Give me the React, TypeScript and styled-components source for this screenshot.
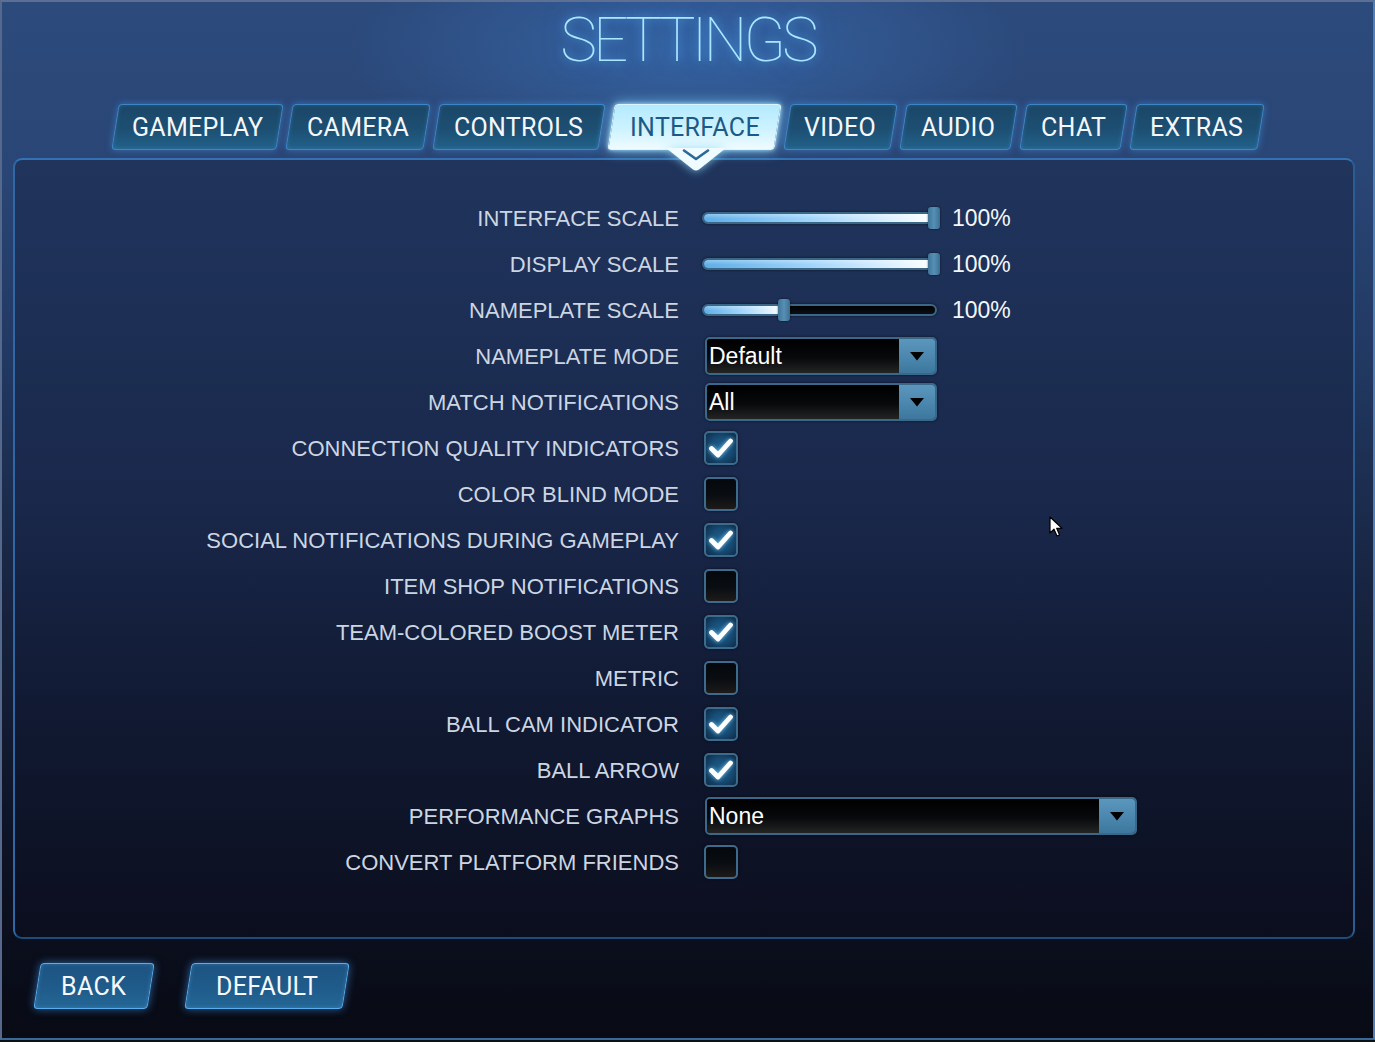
import React from "react";
import styled, { createGlobalStyle, css } from "styled-components";

const GlobalStyle = createGlobalStyle`
  html, body { margin: 0; padding: 0; background: #0c1114; }
  body { font-family: "Liberation Sans", Arial, sans-serif; overflow: hidden; }
  * { box-sizing: border-box; }
`;

const Frame = styled.div`
  position: relative;
  width: 1375px;
  height: 1040px;
  border: 2px solid;
  border-color: #5d6f92 #4f80b6 #3a6898 #56688c;
  background:
    radial-gradient(ellipse 340px 120px at 50% 48px, rgba(62, 122, 196, 0.55), rgba(62, 122, 196, 0) 100%),
    linear-gradient(180deg, #2c4a7c 0%, #2a4676 16%, #213861 35%, #17233f 58%, #0e1427 80%, #080a14 100%);
  display: flex;
  flex-direction: column;
  overflow: hidden;
`;

const Title = styled.h1`
  margin: 0;
  height: 76px;
  line-height: 76px;
  text-align: center;
  font-family: Roboto, "Liberation Sans", sans-serif;
  font-weight: 100;
  font-size: 62px;
  letter-spacing: -4px;
  color: #a9e6ff;
  text-shadow: 0 0 10px rgba(90, 180, 255, 0.85), 0 0 22px rgba(60, 150, 255, 0.5);
`;

const TabRow = styled.nav`
  margin-top: 26px;
  height: 46px;
  display: flex;
  justify-content: center;
  gap: 9px;
`;

const Tab = styled.div<{ $active?: boolean; $w: number }>`
  width: ${(p) => p.$w}px;
  height: 46px;
  display: flex;
  align-items: center;
  justify-content: center;
  transform: skewX(-9deg);
  border-radius: 4px;
  border: 1.5px solid #3d86c6;
  background: linear-gradient(180deg, #1b4666 0%, #1d4f73 55%, #226189 100%);
  box-shadow: 0 0 7px rgba(70, 150, 230, 0.55), inset 0 0 4px rgba(90, 170, 240, 0.25);
  color: #f4f8fc;
  ${(p) =>
    p.$active &&
    css`
      border-color: #d8f6ff;
      background: linear-gradient(180deg, #b4eaff 0%, #cdf3ff 55%, #effbff 100%);
      box-shadow: 0 0 14px rgba(130, 215, 255, 0.85), 0 0 4px rgba(200, 240, 255, 0.9);
      color: #1b5a86;
    `}
`;

const TabLabel = styled.span`
  position: relative;
  height: 100%;
  display: flex;
  align-items: center;
  transform: skewX(9deg);
  font-family: Roboto, "Liberation Sans", sans-serif;
  font-size: 25px;
  font-weight: 400;
  letter-spacing: 0.3px;
`;

const Notch = styled.svg`
  position: absolute;
  top: 100%;
  left: 50%;
  margin-left: -29px;
  margin-top: -1px;
  width: 60px;
  height: 24px;
  filter: drop-shadow(0 0 5px rgba(140, 220, 255, 0.85));
`;

const Panel = styled.section`
  margin: 8px 18px 0 11px;
  height: 781px;
  border: 2px solid;
  border-color: #3472b4 #2a5e92 #1d4c78 #2f68a4;
  border-radius: 9px;
  background: linear-gradient(180deg, #20345c 0%, #1d2f55 20%, #19274a 45%, #111a33 70%, #0b0e1e 100%);
  padding-top: 35px;
  display: flex;
  flex-direction: column;
`;

const Row = styled.div`
  height: 46px;
  display: grid;
  grid-template-columns: 664px 1fr;
  column-gap: 24px;
  align-items: center;
`;

const Label = styled.div`
  text-align: right;
  padding-top: 1px;
  font-family: "Liberation Sans", Arial, sans-serif;
  font-size: 22px;
  color: #ccd6e3;
  white-space: nowrap;
`;

const Control = styled.div`
  display: flex;
  align-items: center;
`;

const SliderWrap = styled.div`
  display: flex;
  align-items: center;
  margin-left: -1px;
`;

const Track = styled.div`
  position: relative;
  width: 235px;
  height: 12px;
  border-radius: 6px;
  border: 2px solid #3b6786;
  background: linear-gradient(180deg, #000000, #0a0f16);
  box-shadow: 0 0 3px rgba(0, 0, 0, 0.6);
`;

const Fill = styled.div`
  height: 100%;
  border-radius: 4px;
  background:
    linear-gradient(180deg, rgba(255, 255, 255, 0.3) 0%, rgba(255, 255, 255, 0) 60%),
    linear-gradient(90deg, #5eaee8 0%, #9fd3fa 45%, #e4f4ff 85%, #ffffff 100%);
`;

const Thumb = styled.div`
  position: absolute;
  top: -7px;
  width: 12px;
  height: 22px;
  border-radius: 3px;
  background: linear-gradient(90deg, #3f7396 0%, #5690b5 50%, #3c6f92 100%);
  box-shadow: 0 0 2px rgba(0, 0, 0, 0.7);
`;

const Value = styled.span`
  margin-left: 15px;
  font-family: "Liberation Sans", Arial, sans-serif;
  font-size: 23px;
  color: #f4f7fa;
`;

const Select = styled.div<{ $wide?: boolean }>`
  margin-left: 2px;
  width: ${(p) => (p.$wide ? "432px" : "232px")};
  height: 38px;
  display: flex;
  border: 2px solid #3a6889;
  border-radius: 5px;
  overflow: hidden;
  box-shadow: 0 0 3px rgba(0, 0, 0, 0.6);
`;

const SelectText = styled.div`
  flex: 1;
  display: flex;
  align-items: center;
  padding-left: 2px;
  background: linear-gradient(180deg, #000000 0%, #07090b 55%, #242424 100%);
  font-family: "Liberation Sans", Arial, sans-serif;
  font-size: 23px;
  color: #ffffff;
`;

const SelectButton = styled.div`
  width: 36px;
  display: flex;
  align-items: center;
  justify-content: center;
  background: linear-gradient(180deg, #5b97bd 0%, #4a86ad 55%, #3d779e 100%);
`;

const Box = styled.div<{ $checked?: boolean }>`
  margin-left: 1px;
  width: 34px;
  height: 34px;
  border-radius: 5px;
  border: 2px solid #3e6a8c;
  display: flex;
  align-items: center;
  justify-content: center;
  background: ${(p) =>
    p.$checked
      ? "radial-gradient(circle at 50% 50%, #1f6494 0%, #164a72 55%, #0d2a45 100%)"
      : "linear-gradient(180deg, #04070c 0%, #0a0d12 55%, #1c1b1a 100%)"};
  box-shadow: 0 0 3px rgba(0, 0, 0, 0.6);
`;

const CheckMark = styled.svg`
  width: 26px;
  height: 22px;
  filter: drop-shadow(0 0 2px rgba(140, 215, 255, 0.9));
`;

const Footer = styled.footer`
  margin-top: 24px;
  padding-left: 35px;
  display: flex;
  gap: 37px;
`;

const Button = styled.button<{ $w: number }>`
  width: ${(p) => p.$w}px;
  height: 46px;
  padding: 0;
  transform: skewX(-9deg);
  border: 1.5px solid #58aef0;
  border-radius: 4px;
  background: linear-gradient(180deg, #1c5482 0%, #1f5b8b 55%, #246796 100%);
  box-shadow: 0 0 8px rgba(70, 160, 250, 0.6), inset 0 0 4px rgba(120, 190, 255, 0.25);
  color: #f6f9fc;
  font-family: Roboto, "Liberation Sans", sans-serif;
  font-size: 25px;
  letter-spacing: 0.4px;
  cursor: pointer;
`;

const ButtonLabel = styled.span`
  display: inline-block;
  transform: skewX(9deg);
`;

const Cursor = styled.svg`
  position: absolute;
  left: 1047px;
  top: 514px;
  width: 14px;
  height: 22px;
`;

type Setting =
  | { label: string; kind: "slider"; pct: number; value: string }
  | { label: string; kind: "select"; value: string; wide?: boolean }
  | { label: string; kind: "check"; checked: boolean };

const settings: Setting[] = [
  { label: "INTERFACE SCALE", kind: "slider", pct: 1, value: "100%" },
  { label: "DISPLAY SCALE", kind: "slider", pct: 1, value: "100%" },
  { label: "NAMEPLATE SCALE", kind: "slider", pct: 0.34, value: "100%" },
  { label: "NAMEPLATE MODE", kind: "select", value: "Default" },
  { label: "MATCH NOTIFICATIONS", kind: "select", value: "All" },
  { label: "CONNECTION QUALITY INDICATORS", kind: "check", checked: true },
  { label: "COLOR BLIND MODE", kind: "check", checked: false },
  { label: "SOCIAL NOTIFICATIONS DURING GAMEPLAY", kind: "check", checked: true },
  { label: "ITEM SHOP NOTIFICATIONS", kind: "check", checked: false },
  { label: "TEAM-COLORED BOOST METER", kind: "check", checked: true },
  { label: "METRIC", kind: "check", checked: false },
  { label: "BALL CAM INDICATOR", kind: "check", checked: true },
  { label: "BALL ARROW", kind: "check", checked: true },
  { label: "PERFORMANCE GRAPHS", kind: "select", value: "None", wide: true },
  { label: "CONVERT PLATFORM FRIENDS", kind: "check", checked: false },
];

const tabs: { name: string; w: number }[] = [
  { name: "GAMEPLAY", w: 165 },
  { name: "CAMERA", w: 138 },
  { name: "CONTROLS", w: 166 },
  { name: "INTERFACE", w: 167 },
  { name: "VIDEO", w: 107 },
  { name: "AUDIO", w: 111 },
  { name: "CHAT", w: 101 },
  { name: "EXTRAS", w: 128 },
];

function Slider({ pct, value }: { pct: number; value: string }) {
  const thumbLeft = pct * 228 - 4;
  return (
    <SliderWrap>
      <Track>
        <Fill style={{ width: `${thumbLeft + 6}px` }} />
        <Thumb style={{ left: `${thumbLeft}px` }} />
      </Track>
      <Value>{value}</Value>
    </SliderWrap>
  );
}

function Dropdown({ value, wide }: { value: string; wide?: boolean }) {
  return (
    <Select $wide={wide}>
      <SelectText>{value}</SelectText>
      <SelectButton>
        <svg width="16" height="10" viewBox="0 0 16 10">
          <path d="M1 1 L15 1 L8 9.5 Z" fill="#000" />
        </svg>
      </SelectButton>
    </Select>
  );
}

function Checkbox({ checked }: { checked: boolean }) {
  return (
    <Box $checked={checked}>
      {checked && (
        <CheckMark viewBox="0 0 26 22">
          <path
            d="M3.5 11.5 L10 18 L22.5 4"
            fill="none"
            stroke="#ffffff"
            strokeWidth="4.8"
            strokeLinecap="round"
            strokeLinejoin="round"
          />
        </CheckMark>
      )}
    </Box>
  );
}

export default function App() {
  return (
    <>
      <GlobalStyle />
      <Frame>
        <Title>SETTINGS</Title>
        <TabRow>
          {tabs.map((t) => (
            <Tab key={t.name} $w={t.w} $active={t.name === "INTERFACE"}>
              <TabLabel>
                {t.name}
                {t.name === "INTERFACE" && (
                  <Notch viewBox="0 0 60 24">
                    <path d="M0 0 L60 0 L33 21.5 Q30 23.5 27 21.5 Z" fill="#f0fbff" />
                    <path
                      d="M18 2.5 L30 11 L42 2.5"
                      fill="none"
                      stroke="#2a6896"
                      strokeWidth="2.6"
                      strokeLinecap="round"
                      strokeLinejoin="round"
                    />
                  </Notch>
                )}
              </TabLabel>
            </Tab>
          ))}
        </TabRow>
        <Panel>
          {settings.map((s) => (
            <Row key={s.label}>
              <Label>{s.label}</Label>
              <Control>
                {s.kind === "slider" && <Slider pct={s.pct} value={s.value} />}
                {s.kind === "select" && <Dropdown value={s.value} wide={s.wide} />}
                {s.kind === "check" && <Checkbox checked={s.checked} />}
              </Control>
            </Row>
          ))}
        </Panel>
        <Footer>
          <Button $w={114}>
            <ButtonLabel>BACK</ButtonLabel>
          </Button>
          <Button $w={158}>
            <ButtonLabel>DEFAULT</ButtonLabel>
          </Button>
        </Footer>
        <Cursor viewBox="0 0 14 22">
          <path
            d="M1 1 L1 17 L5 13.2 L8 20 L10.6 18.9 L7.7 12.3 L13 12.3 Z"
            fill="#ffffff"
            stroke="#000000"
            strokeWidth="1.2"
            strokeLinejoin="round"
          />
        </Cursor>
      </Frame>
    </>
  );
}
